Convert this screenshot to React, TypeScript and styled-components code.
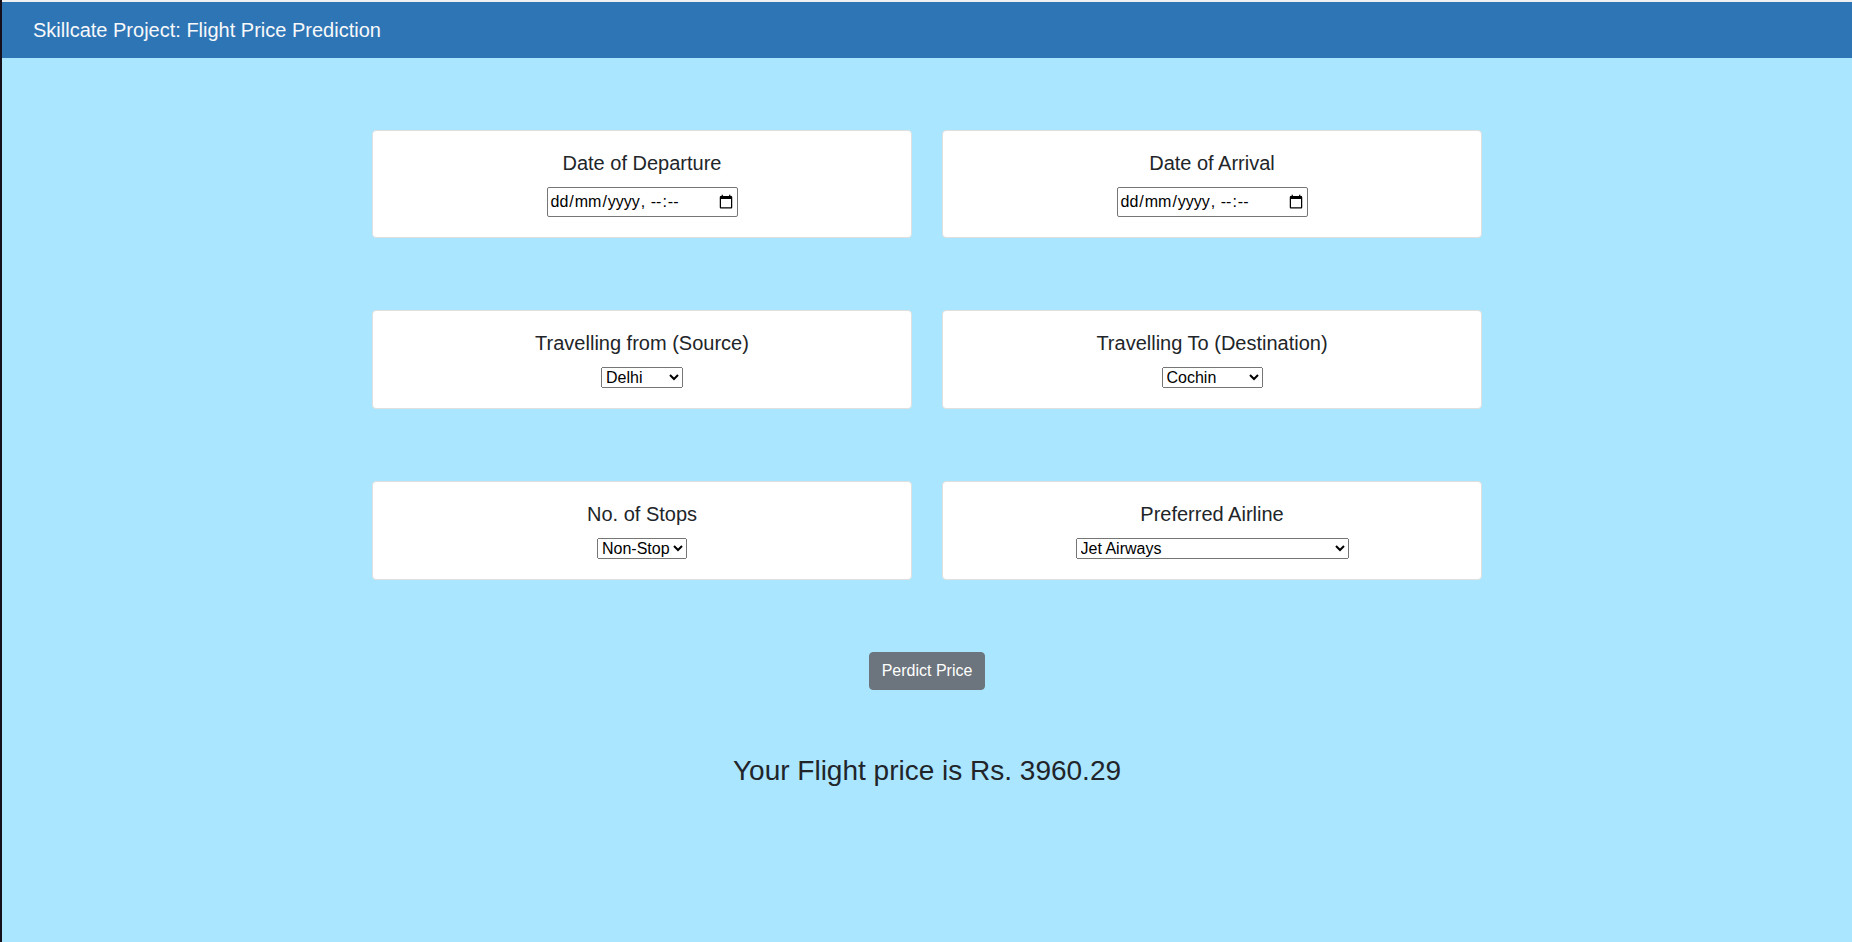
import React, { useState } from "react";
import styled, { createGlobalStyle } from "styled-components";

const GlobalStyle = createGlobalStyle`
  *, *::before, *::after { box-sizing: border-box; }
  html { background: #aae6ff; }
  body {
    margin: 0;
    color: #212529;
    font-family: "Liberation Sans", Arial, sans-serif;
    font-size: 16px;
    line-height: 24px;
  }
`;

const Page = styled.div`
  min-height: 100vh;
  border-left: 2px solid #150f1b;
  background: #aae6ff;
`;

const NavBar = styled.nav`
  display: flex;
  align-items: center;
  padding: 8px 31px;
  border-top: 2px solid #eef0f2;
  background: #2e75b6;
`;

const Brand = styled.a`
  padding: 5px 0;
  color: #f8f9fa;
  font-size: 20px;
  line-height: 30px;
  text-decoration: none;
`;

const Form = styled.form`
  display: flex;
  flex-direction: column;
  align-items: center;
  gap: 72px;
  padding: 72px 15px 0;
`;

const Row = styled.div`
  display: grid;
  grid-template-columns: 1fr 1fr;
  gap: 30px;
  width: 100%;
  max-width: 1110px;
`;

const Card = styled.div`
  display: flex;
  flex-direction: column;
  align-items: center;
  padding: 20px;
  border: 1px solid #dfdfdf;
  border-radius: 4px;
  background: #fff;
`;

const Title = styled.label`
  margin-bottom: 12px;
  font-size: 20px;
  line-height: 24px;
`;

const DateBox = styled.div`
  position: relative;
  display: flex;
`;

const DateField = styled.input<{ $empty: boolean }>`
  width: 191px;
  height: 30px;
  margin: 0;
  padding: 1px;
  border: 1px solid #767676;
  border-radius: 2px;
  background: #fff;
  color: #000;
  font: inherit;

  &::-webkit-datetime-edit {
    opacity: ${(p) => (p.$empty ? 0 : 1)};
  }
`;

/* Day-first hint shown over the field until a date is chosen. */
const DateHint = styled.span`
  position: absolute;
  inset: 0 auto 0 3px;
  display: flex;
  align-items: center;
  color: #000;
  white-space: pre;
  pointer-events: none;
`;

const HintPart = styled.span`
  padding: 0 1px;
`;

const Select = styled.select<{ $width: number }>`
  width: ${(p) => p.$width}px;
  height: 21px;
  margin: 0;
  font: inherit;
  line-height: normal;
`;

const Submit = styled.button`
  padding: 6px 12px;
  border: 1px solid #6c757d;
  border-radius: 4px;
  background: #6c757d;
  color: #fff;
  font: inherit;
`;

const Result = styled.h3`
  margin: 64px 0 0;
  font-size: 28px;
  font-weight: 500;
  line-height: 34px;
  text-align: center;
`;

type ChoiceProps = { id: string; title: string; width: number; options: string[] };

const Choice = ({ id, title, width, options }: ChoiceProps) => (
  <Card>
    <Title htmlFor={id}>{title}</Title>
    <Select id={id} name={id} $width={width}>
      {options.map((o) => (
        <option key={o}>{o}</option>
      ))}
    </Select>
  </Card>
);

const DateChoice = ({ id, title }: { id: string; title: string }) => {
  const [value, setValue] = useState("");
  return (
    <Card>
      <Title htmlFor={id}>{title}</Title>
      <DateBox>
        <DateField
          id={id}
          name={id}
          type="datetime-local"
          value={value}
          $empty={value === ""}
          onChange={(e) => setValue(e.target.value)}
        />
        {value === "" && (
          <DateHint aria-hidden="true">
            <HintPart>dd</HintPart>/<HintPart>mm</HintPart>/<HintPart>yyyy</HintPart>
            {", "}
            <HintPart>--</HintPart>:<HintPart>--</HintPart>
          </DateHint>
        )}
      </DateBox>
    </Card>
  );
};

export default function App() {
  return (
    <Page>
      <GlobalStyle />
      <NavBar>
        <Brand href="#">Skillcate Project: Flight Price Prediction</Brand>
      </NavBar>
      <main>
        <Form onSubmit={(e) => e.preventDefault()}>
          <Row>
            <DateChoice id="departure" title="Date of Departure" />
            <DateChoice id="arrival" title="Date of Arrival" />
          </Row>
          <Row>
            <Choice id="source" title="Travelling from (Source)" width={82} options={["Delhi", "Kolkata", "Mumbai", "Chennai"]} />
            <Choice id="destination" title="Travelling To (Destination)" width={101} options={["Cochin", "Delhi", "New Delhi", "Hyderabad", "Kolkata"]} />
          </Row>
          <Row>
            <Choice id="stops" title="No. of Stops" width={90} options={["Non-Stop", "1", "2", "3", "4"]} />
            <Choice id="airline" title="Preferred Airline" width={273} options={["Jet Airways", "IndiGo", "Air India", "SpiceJet", "Vistara"]} />
          </Row>
          <Submit type="submit">Perdict Price</Submit>
        </Form>
        <Result>Your Flight price is Rs. 3960.29</Result>
      </main>
    </Page>
  );
}
